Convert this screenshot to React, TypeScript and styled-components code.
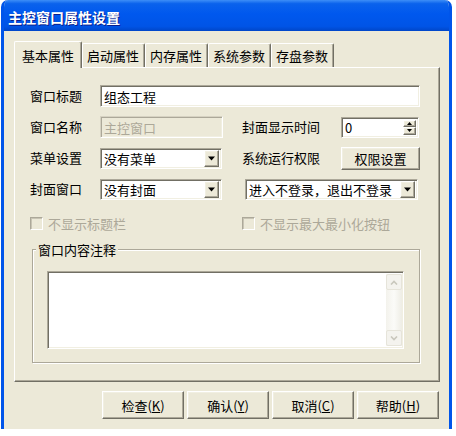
import React from "react";
import styled, { createGlobalStyle, css } from "styled-components";

const GlobalStyle = createGlobalStyle`
  html, body { margin: 0; padding: 0; background: #fff; }
  body {
    font-family: "Noto Sans CJK SC", "Liberation Sans", sans-serif;
    font-size: 13px;
    color: #000;
  }
  * { box-sizing: border-box; }
`;

const sunken = css`
  border: 1px solid;
  border-color: #aca899 #ffffff #ffffff #aca899;
  box-shadow: inset 1px 1px 0 #716f64, inset -1px -1px 0 #f1efe2;
`;

const raised = css`
  border: 1px solid;
  border-color: #ffffff #716f64 #716f64 #ffffff;
  box-shadow: inset -1px -1px 0 #aca899, inset 1px 1px 0 #f1efe2;
  background: #ece9d8;
`;

const Window = styled.div`
  width: 451px;
  height: 429px;
  margin-left: 1px;
  display: flex;
  flex-direction: column;
  background: #ece9d8;
  border-left: 3px solid #0055ea;
  border-right: 3px solid #0055ea;
  border-radius: 7px 7px 0 0;
  overflow: hidden;
`;

const TitleBar = styled.div`
  height: 31px;
  margin: 0 -3px;
  padding: 2px 0 0 7px;
  display: flex;
  align-items: center;
  background: linear-gradient(180deg, #3d8ef7 0%, #0a62ec 12%, #0058ee 45%, #0054e6 85%, #0046c8 100%);
  color: #fff;
  font-weight: bold;
  font-size: 14px;
  text-shadow: 1px 1px 0 #0a1e8c;
`;

const Body = styled.div`
  flex: 1;
  padding: 10px 9px 0 10px;
  display: flex;
  flex-direction: column;
`;

const TabStrip = styled.div`
  height: 27px;
  display: flex;
  align-items: flex-end;
  margin-bottom: -1px;
  position: relative;
  z-index: 1;
`;

const Tab = styled.div<{ $active?: boolean }>`
  height: ${({ $active }) => ($active ? "27px" : "24px")};
  margin-bottom: ${({ $active }) => ($active ? "0" : "1px")};
  padding: ${({ $active }) => ($active ? "0 7px" : "0 5px 0 4px")};
  display: flex;
  align-items: center;
  background: #ece9d8;
  border-top: 1px solid #fff;
  border-left: 1px solid #fff;
  border-right: 1px solid #716f64;
  box-shadow: inset -1px 0 0 #aca899;
  border-radius: 2px 2px 0 0;
  white-space: nowrap;
`;

const Panel = styled.div`
  height: 315px;
  padding: 17px 0 0 15px;
  border: 1px solid;
  border-color: #ffffff #716f64 #716f64 #ffffff;
  box-shadow: inset -1px -1px 0 #aca899;
`;

const FormGrid = styled.div`
  display: grid;
  grid-template-columns: 70px 123px 19px 99px 79px;
  grid-template-rows: repeat(4, 22px);
  row-gap: 9px;
  align-items: center;
`;

const Label = styled.div<{ $col?: number }>`
  grid-column: ${({ $col }) => $col ?? 1};
  white-space: nowrap;
  line-height: 16px;
`;

const TextBox = styled.div<{ $disabled?: boolean; $span?: string }>`
  ${sunken};
  grid-column: ${({ $span }) => $span ?? "2"};
  height: 22px;
  padding: 0 3px;
  display: flex;
  align-items: center;
  background: ${({ $disabled }) => ($disabled ? "#ece9d8" : "#fff")};
  color: ${({ $disabled }) => ($disabled ? "#aca899" : "#000")};
  ${({ $disabled }) =>
    $disabled &&
    css`
      border-color: #d6d2c2 #ffffff #ffffff #d6d2c2;
      box-shadow: inset 1px 1px 0 #aca899, inset -1px -1px 0 #f1efe2;
    `}
`;

const Spin = styled.div`
  ${sunken};
  grid-column: 5;
  width: 78px;
  height: 21px;
  display: flex;
  background: #fff;
  padding: 2px;
`;

const SpinText = styled.div`
  flex: 1;
  padding-left: 1px;
  line-height: 15px;
`;

const SpinButtons = styled.div`
  width: 13px;
  display: flex;
  flex-direction: column;
`;

const SpinButton = styled.div`
  ${raised};
  flex: 1;
  display: flex;
  align-items: center;
  justify-content: center;
`;

const Combo = styled.div<{ $wide?: boolean }>`
  ${sunken};
  grid-column: ${({ $wide }) => ($wide ? "4 / 6" : "2")};
  width: ${({ $wide }) => ($wide ? "173px" : "122px")};
  margin-left: ${({ $wide }) => ($wide ? "3px" : "0")};
  height: 21px;
  padding: 2px 2px 2px 3px;
  display: flex;
  align-items: center;
  background: #fff;
`;

const ComboText = styled.div`
  flex: 1;
  white-space: nowrap;
  overflow: hidden;
`;

const ComboButton = styled.div`
  ${raised};
  width: 15px;
  height: 17px;
  display: flex;
  align-items: center;
  justify-content: center;
`;

const PushButton = styled.div<{ $w?: number; $h?: number }>`
  ${raised};
  width: ${({ $w }) => $w ?? 82}px;
  height: ${({ $h }) => $h ?? 28}px;
  display: flex;
  align-items: center;
  justify-content: center;
  white-space: nowrap;
`;

const GridButton = styled(PushButton)`
  grid-column: 5;
`;

const CheckRow = styled.div`
  margin-top: 16px;
  display: grid;
  grid-template-columns: 212px 1fr;
  color: #aca899;
`;

const CheckItem = styled.div`
  display: flex;
  align-items: center;
  gap: 5px;
  height: 14px;
  white-space: nowrap;
`;

const CheckBox = styled.span`
  width: 13px;
  height: 13px;
  border: 1px solid;
  border-color: #aca899 #fff #fff #aca899;
  box-shadow: inset 1px 1px 0 #c8c4b4;
  background: #ece9d8;
`;

const Group = styled.fieldset`
  margin: 12px 0 0 2px;
  width: 388px;
  padding: 14px 15px 13px 14px;
  border: 1px solid #aca899;
  box-shadow: inset 1px 1px 0 #fff, 1px 1px 0 #fff;
`;

const Legend = styled.legend`
  margin-left: -11px;
  padding: 0 2px;
  line-height: 15px;
  background: #ece9d8;
`;

const Memo = styled.div`
  ${sunken};
  height: 78px;
  background: #fff;
  display: flex;
  justify-content: flex-end;
  padding: 2px 1px 2px 2px;
`;

const ScrollBar = styled.div`
  width: 16px;
  display: flex;
  flex-direction: column;
  background: linear-gradient(90deg, #f3f2ec, #fbfbf8 50%, #eeede5);
`;

const ScrollArrow = styled.div`
  width: 16px;
  height: 16px;
  border: 1px solid #e6e4da;
  border-radius: 2px;
  background: #f4f3ee;
  display: flex;
  align-items: center;
  justify-content: center;
`;

const Track = styled.div`
  flex: 1;
`;

const ButtonRow = styled.div`
  margin-top: 9px;
  padding-right: 1px;
  display: flex;
  justify-content: flex-end;
  gap: 3px;
`;

const Key = styled.span`
  text-decoration: underline;
`;

const DownTriangle = ({ size = 7 }: { size?: number }) => (
  <svg width={size} height={Math.ceil(size / 2) + 1} viewBox="0 0 7 4">
    <polygon points="0,0 7,0 3.5,4" fill="#000" />
  </svg>
);

const UpTriangle = () => (
  <svg width={5} height={3} viewBox="0 0 5 3">
    <polygon points="0,3 5,3 2.5,0" fill="#000" />
  </svg>
);

const Chevron = ({ up }: { up?: boolean }) => (
  <svg width={8} height={5} viewBox="0 0 8 5">
    <polyline
      points={up ? "1,4.5 4,1.5 7,4.5" : "1,0.5 4,3.5 7,0.5"}
      fill="none"
      stroke="#c9c7bd"
      strokeWidth={1.6}
    />
  </svg>
);

const tabs = ["基本属性", "启动属性", "内存属性", "系统参数", "存盘参数"];

export default function App() {
  return (
    <>
      <GlobalStyle />
      <Window>
        <TitleBar>主控窗口属性设置</TitleBar>
        <Body>
          <TabStrip>
            {tabs.map((t, i) => (
              <Tab key={t} $active={i === 0}>
                {t}
              </Tab>
            ))}
          </TabStrip>
          <Panel>
            <FormGrid>
              <Label>窗口标题</Label>
              <TextBox $span="2 / 6">组态工程</TextBox>

              <Label>窗口名称</Label>
              <TextBox $disabled>主控窗口</TextBox>
              <Label $col={4}>封面显示时间</Label>
              <Spin>
                <SpinText>0</SpinText>
                <SpinButtons>
                  <SpinButton>
                    <UpTriangle />
                  </SpinButton>
                  <SpinButton>
                    <svg width={5} height={3} viewBox="0 0 5 3">
                      <polygon points="0,0 5,0 2.5,3" fill="#000" />
                    </svg>
                  </SpinButton>
                </SpinButtons>
              </Spin>

              <Label>菜单设置</Label>
              <Combo>
                <ComboText>没有菜单</ComboText>
                <ComboButton>
                  <DownTriangle />
                </ComboButton>
              </Combo>
              <Label $col={4}>系统运行权限</Label>
              <GridButton $w={79} $h={23}>
                权限设置
              </GridButton>

              <Label>封面窗口</Label>
              <Combo>
                <ComboText>没有封面</ComboText>
                <ComboButton>
                  <DownTriangle />
                </ComboButton>
              </Combo>
              <Combo $wide>
                <ComboText>进入不登录，退出不登录</ComboText>
                <ComboButton>
                  <DownTriangle />
                </ComboButton>
              </Combo>
            </FormGrid>

            <CheckRow>
              <CheckItem>
                <CheckBox />
                不显示标题栏
              </CheckItem>
              <CheckItem>
                <CheckBox />
                不显示最大最小化按钮
              </CheckItem>
            </CheckRow>

            <Group>
              <Legend>窗口内容注释</Legend>
              <Memo>
                <ScrollBar>
                  <ScrollArrow>
                    <Chevron up />
                  </ScrollArrow>
                  <Track />
                  <ScrollArrow>
                    <Chevron />
                  </ScrollArrow>
                </ScrollBar>
              </Memo>
            </Group>
          </Panel>

          <ButtonRow>
            <PushButton>
              检查(<Key>K</Key>)
            </PushButton>
            <PushButton>
              确认(<Key>Y</Key>)
            </PushButton>
            <PushButton>
              取消(<Key>C</Key>)
            </PushButton>
            <PushButton>
              帮助(<Key>H</Key>)
            </PushButton>
          </ButtonRow>
        </Body>
      </Window>
    </>
  );
}
